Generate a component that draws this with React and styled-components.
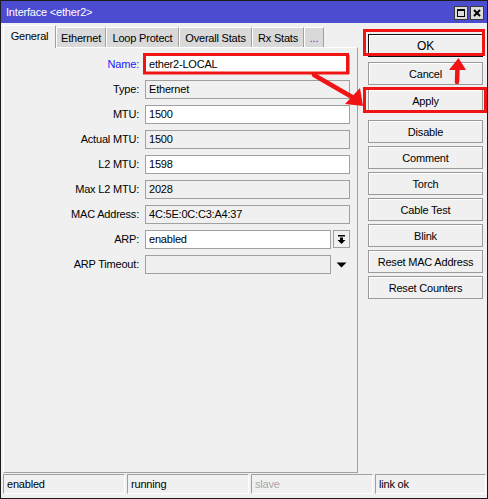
import React from 'react';
import styled, { createGlobalStyle } from 'styled-components';

const GlobalStyle = createGlobalStyle`
  html, body {
    margin: 0;
    padding: 0;
    background: #f0f0f0;
  }
  body {
    font-family: "Liberation Sans", Arial, sans-serif;
    font-size: 11px;
  }
  * {
    box-sizing: border-box;
  }
`;

const fields = [
  { label: 'Name:', value: 'ether2-LOCAL', edit: true, accent: true },
  { label: 'Type:', value: 'Ethernet' },
  { label: 'MTU:', value: '1500', edit: true },
  { label: 'Actual MTU:', value: '1500' },
  { label: 'L2 MTU:', value: '1598', edit: true },
  { label: 'Max L2 MTU:', value: '2028' },
  { label: 'MAC Address:', value: '4C:5E:0C:C3:A4:37' },
  { label: 'ARP:', value: 'enabled', edit: true, drop: 'button' },
  { label: 'ARP Timeout:', value: '', drop: 'arrow' },
];

const tabs = [
  { name: 'General', width: 53, active: true },
  { name: 'Ethernet', width: 50 },
  { name: 'Loop Protect', width: 73 },
  { name: 'Overall Stats', width: 73 },
  { name: 'Rx Stats', width: 52 },
  { name: '...', width: 20 },
];

const buttons = [
  { name: 'OK', primary: true, top: 0 },
  { name: 'Cancel', top: 5 },
  { name: 'Apply', top: 4 },
  { name: 'Disable', top: 8 },
  { name: 'Comment', top: 3 },
  { name: 'Torch', top: 3 },
  { name: 'Cable Test', top: 3 },
  { name: 'Blink', top: 3 },
  { name: 'Reset MAC Address', top: 3 },
  { name: 'Reset Counters', top: 3 },
];

const status = [
  { text: 'enabled' },
  { text: 'running' },
  { text: 'slave', muted: true },
  { text: 'link ok' },
];

const Window = styled.div`
  position: relative;
  width: 488px;
  height: 499px;
  border: 1px solid #1c1c1c;
  background: #f0f0f0;
  display: flex;
  flex-direction: column;
  color: #000;
  letter-spacing: -0.2px;
`;

const TitleBar = styled.div`
  height: 22px;
  flex: none;
  background: #4c4cd0;
  color: #fff;
  display: flex;
  align-items: center;
  justify-content: space-between;
  padding: 0 3px 0 5px;
`;

const TitleButtons = styled.div`
  display: flex;
  gap: 2px;
  margin-top: 2px;
`;

const TitleButton = styled.div`
  width: 14px;
  height: 14px;
  background: #dcdcdc;
  border: 1px solid #3a3a3a;
  display: flex;
  align-items: center;
  justify-content: center;
`;

const Body = styled.div`
  flex: 1;
  display: flex;
  padding: 2px 4px 0 2px;
`;

const TabArea = styled.div`
  width: 355px;
  display: flex;
  flex-direction: column;
`;

const TabStrip = styled.div`
  height: 22px;
  display: flex;
  align-items: flex-end;
`;

const Tab = styled.div`
  position: relative;
  z-index: ${p => (p.$active ? 1 : 0)};
  width: ${p => p.$width}px;
  height: ${p => (p.$active ? 23 : 20)}px;
  margin-bottom: ${p => (p.$active ? -1 : 0)}px;
  background: ${p => (p.$active ? '#f0f0f0' : '#d9d9d9')};
  border-top: 1px solid #fff;
  border-left: 1px solid #fff;
  border-right: 1px solid #a0a0a0;
  display: flex;
  align-items: center;
  justify-content: center;
  padding-bottom: ${p => (p.$active ? 3 : 0)}px;
  white-space: nowrap;
  color: ${p => (p.$muted ? '#6a2ca0' : '#000')};
`;

const Panel = styled.div`
  flex: 1;
  border-top: 1px solid #fff;
  border-left: 1px solid #fff;
  border-right: 1px solid #a0a0a0;
  border-bottom: 1px solid #a0a0a0;
  padding-top: 7px;
`;

const Form = styled.div`
  display: grid;
  grid-template-columns: 135px 205px;
  column-gap: 6px;
  row-gap: 6px;
`;

const Label = styled.div`
  height: 19px;
  line-height: 19px;
  text-align: right;
  white-space: nowrap;
  color: ${p => (p.$accent ? '#1a1aff' : '#000')};
`;

const Field = styled.div`
  display: flex;
  gap: 2px;
  height: 19px;
`;

const Value = styled.div`
  flex: 1;
  height: 19px;
  line-height: 17px;
  padding-left: 3px;
  border: 1px solid #a0a0a0;
  background: ${p => (p.$edit ? '#fff' : '#f0f0f0')};
  white-space: nowrap;
  overflow: hidden;
`;

const DropButton = styled.div`
  width: 17px;
  height: 18px;
  border: 1px solid #a0a0a0;
  background: #f0f0f0;
  display: flex;
  align-items: center;
  justify-content: center;
`;

const DropArrow = styled.div`
  width: 17px;
  display: flex;
  align-items: center;
  justify-content: center;
`;

const ButtonColumn = styled.div`
  width: 115px;
  margin-left: 10px;
  padding-top: 9px;
  display: flex;
  flex-direction: column;
`;

const Button = styled.div`
  height: 23px;
  flex: none;
  margin-top: ${p => p.$top}px;
  border: 1px solid ${p => (p.$primary ? '#111' : '#9a9a9a')};
  background: #f0f0f0;
  box-shadow: inset 1px 1px 0 #fff;
  display: flex;
  align-items: center;
  justify-content: center;
  white-space: nowrap;
  font-size: ${p => (p.$primary ? 12 : 11)}px;
`;

const StatusBar = styled.div`
  height: 25px;
  flex: none;
  display: grid;
  grid-template-columns: 122px 122px 122px 111px;
  column-gap: 2px;
  padding: 1px 1px 4px 2px;
`;

const StatusCell = styled.div`
  height: 20px;
  line-height: 18px;
  padding-left: 3px;
  border: 1px solid;
  border-color: #a0a0a0 #fff #fff #a0a0a0;
  color: ${p => (p.$muted ? '#a8a8a8' : '#000')};
`;

const Overlay = styled.svg`
  position: absolute;
  top: -1px;
  left: -1px;
  width: 488px;
  height: 499px;
  pointer-events: none;
`;

const MaxIcon = () => (
  <svg width="10" height="10" viewBox="0 0 10 10">
    <rect x="1.5" y="1.5" width="7" height="7" fill="none" stroke="#000" strokeWidth="1" />
    <rect x="1" y="1" width="8" height="2" fill="#000" />
  </svg>
);

const CloseIcon = () => (
  <svg width="10" height="10" viewBox="0 0 10 10">
    <path d="M2 2 L8 8 M8 2 L2 8" stroke="#000" strokeWidth="2" />
  </svg>
);

const DropIcon = () => (
  <svg width="11" height="11" viewBox="0 0 11 11">
    <rect x="2" y="1" width="7" height="1.5" fill="#000" />
    <rect x="4" y="3.5" width="3" height="3" fill="#000" />
    <polygon points="1.5,6 9.5,6 5.5,10" fill="#000" />
  </svg>
);

const ArrowIcon = () => (
  <svg width="11" height="6" viewBox="0 0 11 6">
    <polygon points="0.5,0.5 10.5,0.5 5.5,5.5" fill="#000" />
  </svg>
);

const red = '#f01414';

const App = () => {
  return (
    <>
      <GlobalStyle />
      <Window>
        <TitleBar>
          <span>Interface &lt;ether2&gt;</span>
          <TitleButtons>
            <TitleButton><MaxIcon /></TitleButton>
            <TitleButton><CloseIcon /></TitleButton>
          </TitleButtons>
        </TitleBar>

        <Body>
          <TabArea>
            <TabStrip>
              {tabs.map(t => (
                <Tab key={t.name} $width={t.width} $active={t.active} $muted={t.name === '...'}>
                  {t.name}
                </Tab>
              ))}
            </TabStrip>
            <Panel>
              <Form>
                {fields.map(f => (
                  <React.Fragment key={f.label}>
                    <Label $accent={f.accent}>{f.label}</Label>
                    <Field>
                      <Value $edit={f.edit}>{f.value}</Value>
                      {f.drop === 'button' && (
                        <DropButton><DropIcon /></DropButton>
                      )}
                      {f.drop === 'arrow' && (
                        <DropArrow><ArrowIcon /></DropArrow>
                      )}
                    </Field>
                  </React.Fragment>
                ))}
              </Form>
            </Panel>
          </TabArea>

          <ButtonColumn>
            {buttons.map(b => (
              <Button key={b.name} $primary={b.primary} $top={b.top}>
                {b.name}
              </Button>
            ))}
          </ButtonColumn>
        </Body>

        <StatusBar>
          {status.map(s => (
            <StatusCell key={s.text} $muted={s.muted}>{s.text}</StatusCell>
          ))}
        </StatusBar>

        {/* red annotations drawn over the window */}
        <Overlay viewBox="0 0 488 499">
          <rect x="144.5" y="54.5" width="203" height="18.5" fill="none" stroke={red} strokeWidth="3" />
          <rect x="364.5" y="30.5" width="119" height="24" fill="none" stroke={red} strokeWidth="3" />
          <rect x="364.5" y="88.5" width="121" height="23" fill="none" stroke={red} strokeWidth="3" />
          <line x1="314" y1="75" x2="352" y2="97" stroke={red} strokeWidth="4.5" strokeLinecap="round" />
          <polygon points="360,88 363,106 345,104" fill={red} />
          <line x1="457" y1="82" x2="457.5" y2="66" stroke={red} strokeWidth="4.5" strokeLinecap="round" />
          <polygon points="458.5,58 449,70 466,70" fill={red} />
        </Overlay>
      </Window>
    </>
  );
};

export default App;
